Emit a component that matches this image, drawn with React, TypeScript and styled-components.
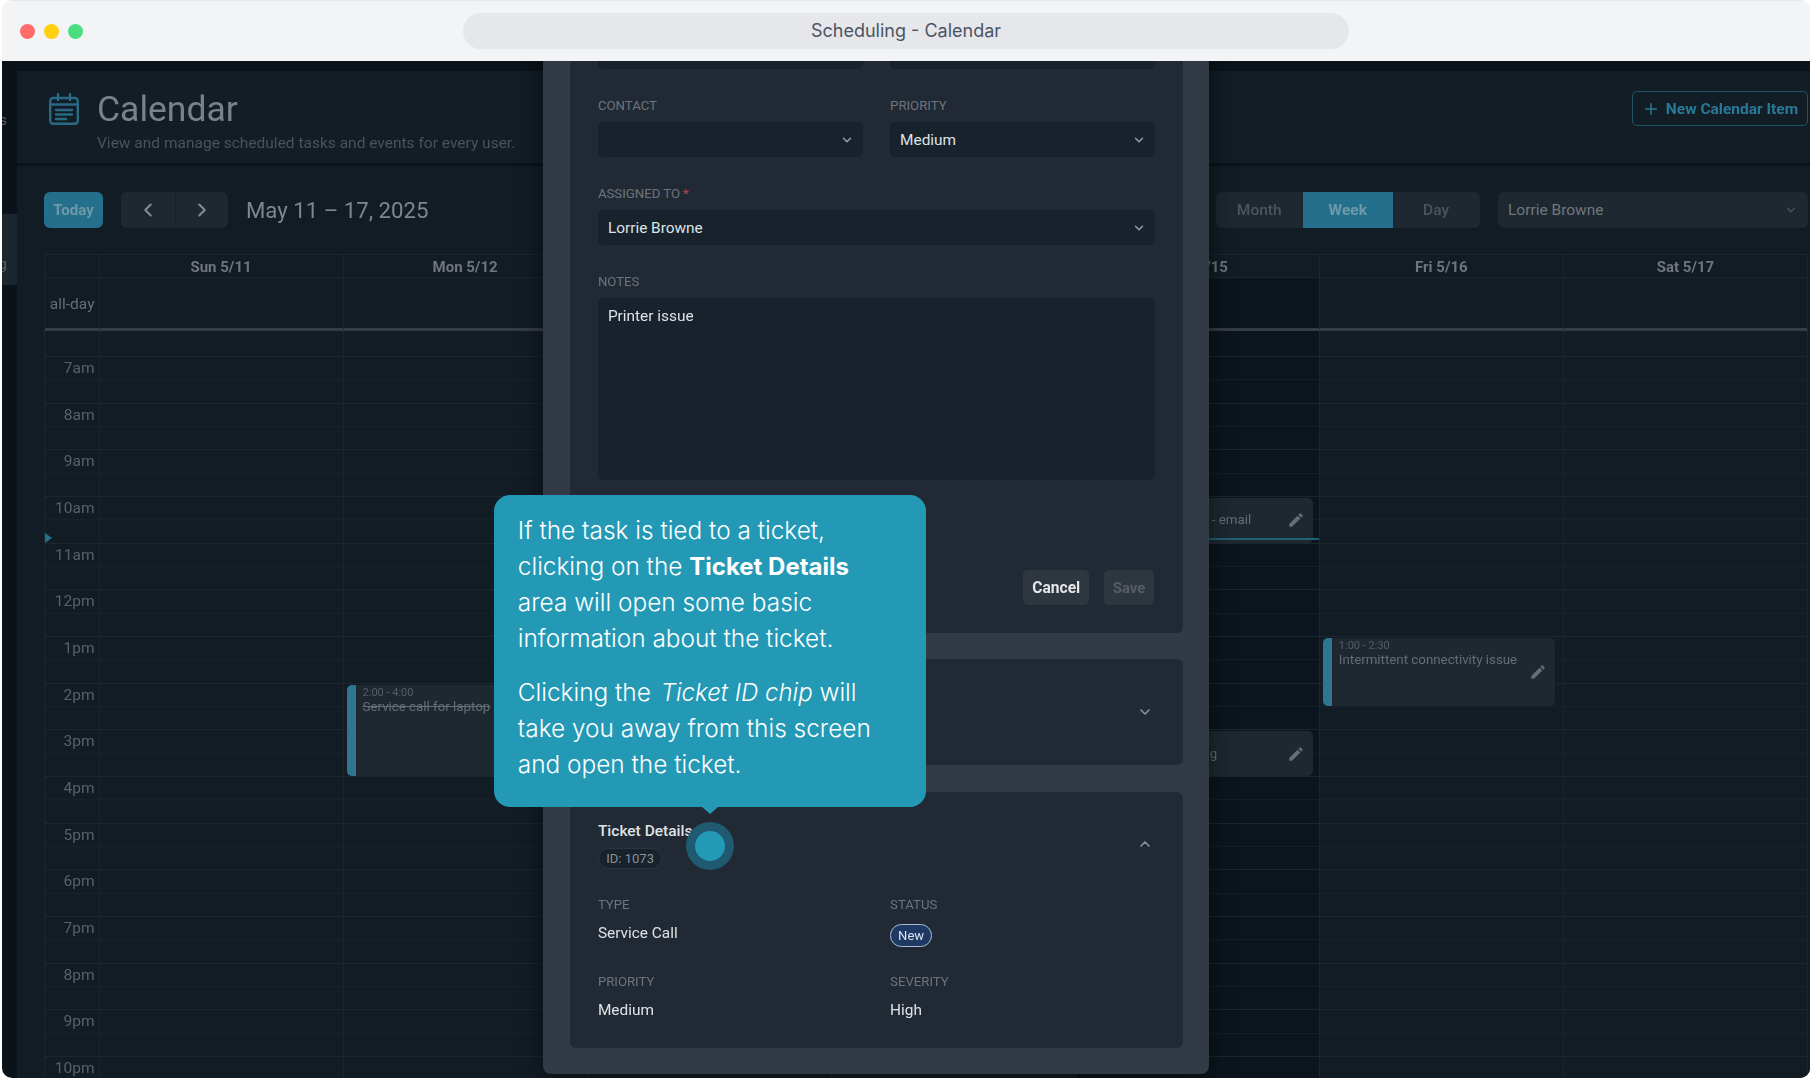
import React from 'react';
import styled, { createGlobalStyle } from 'styled-components';
import { ChevronDown, ChevronLeft, ChevronRight, ChevronUp, Plus } from 'lucide-react';
import { MdEdit } from 'react-icons/md';

const GlobalStyle = createGlobalStyle`
  html, body {
    margin: 0;
    width: 1812px;
    height: 1080px;
    overflow: hidden;
    background: #fff;
    font-family: 'Roboto', 'Liberation Sans', sans-serif;
  }
  * { box-sizing: border-box; }
`;

const Window = styled.div`
  margin-left: 2px;
  width: 1808px;
  height: 1078px;
  border-radius: 10px;
  overflow: hidden;
  display: flex;
  flex-direction: column;
`;

const TitleBar = styled.div`
  height: 61px;
  flex: none;
  display: flex;
  align-items: center;
  background: #f3f4f6;
  border-top: 1px solid #e5e7eb;
`;

const Dots = styled.div`
  width: 461px;
  padding-left: 18px;
  display: flex;
  gap: 9px;
`;

const Dot = styled.span<{ color: string }>`
  width: 15px;
  height: 15px;
  border-radius: 50%;
  background: ${props => props.color};
`;

const AddressBar = styled.div`
  width: 886px;
  height: 36px;
  border-radius: 18px;
  background: #e5e7eb;
  color: #4b5563;
  font-family: 'Inter', sans-serif;
  font-size: 18px;
  line-height: 36px;
  text-align: center;
`;

const Content = styled.div`
  flex: 1;
  position: relative;
  overflow: hidden;
  background: #0a131a;
`;

const Backdrop = styled.div`
  height: 100%;
  display: flex;
  filter: blur(0.5px);
`;

const Rail = styled.div`
  width: 15px;
  flex: none;
  padding-top: 9px;
  display: flex;
  flex-direction: column;
  gap: 73px;
`;

const NavItem = styled.div<{ active?: boolean }>`
  height: 71px;
  display: flex;
  justify-content: flex-end;
  align-items: flex-end;
  overflow: hidden;
  padding: 0 10px 12px 0;
  background: ${props => (props.active ? '#1c2630' : 'transparent')};
  color: #5a6167;
  font-size: 15px;
  line-height: 18px;
  white-space: nowrap;
`;

const Main = styled.div`
  flex: 1;
  min-width: 0;
  display: flex;
  flex-direction: column;
  padding-top: 10px;
`;

const Header = styled.div`
  height: 92px;
  flex: none;
  display: flex;
  background: #131d26;
  padding: 18px 2px 0 31.5px;
`;

const CalendarIcon = styled.svg`
  width: 30px;
  height: 32px;
  margin-top: 4px;
  margin-right: 18.5px;
  flex: none;
`;

const TitleBlock = styled.div`
  flex: 1;
`;

const Title = styled.div`
  font-size: 35.5px;
  line-height: 40px;
  color: #7a8188;
`;

const Subtitle = styled.div`
  margin-top: 4px;
  font-size: 15.5px;
  line-height: 20px;
  color: #4b535a;
`;

const NewButton = styled.div`
  width: 176px;
  height: 35px;
  margin-top: 2px;
  border: 1.5px solid #1f5468;
  border-radius: 5px;
  color: #277a97;
  font-size: 15.5px;
  font-weight: 700;
  display: flex;
  align-items: center;
  justify-content: center;
  gap: 6px;
  white-space: nowrap;
`;

const Panel = styled.div`
  flex: 1;
  min-height: 0;
  margin-top: 3px;
  background: #121c25;
  padding: 26px 2px 0 27px;
  overflow: hidden;
`;

const Toolbar = styled.div`
  height: 36px;
  display: flex;
  align-items: center;
`;

const TodayButton = styled.div`
  width: 59px;
  height: 36px;
  border-radius: 6px;
  background: #24708c;
  color: #6f98a8;
  font-size: 15px;
  font-weight: 700;
  display: flex;
  align-items: center;
  justify-content: center;
`;

const NavGroup = styled.div`
  margin-left: 18px;
  width: 107px;
  height: 36px;
  border-radius: 6px;
  overflow: hidden;
  background: #1e2831;
  display: grid;
  grid-template-columns: 1fr 1fr;
  color: #858b91;
`;

const NavCell = styled.div<{ divided?: boolean }>`
  display: flex;
  align-items: center;
  justify-content: center;
  border-left: ${props => (props.divided ? '1px solid #18222b' : 'none')};
`;

const DateRange = styled.div`
  margin-left: 18px;
  flex: 1;
  font-size: 22.2px;
  line-height: 38px;
  color: #80868c;
`;

const ViewGroup = styled.div`
  width: 264px;
  height: 36px;
  border-radius: 6px;
  overflow: hidden;
  background: #1e2831;
  display: grid;
  grid-template-columns: 87.5px 89.5px 87px;
`;

const ViewTab = styled.div<{ active?: boolean }>`
  background: ${props => (props.active ? '#24708c' : 'transparent')};
  color: ${props => (props.active ? '#6f98a8' : '#4d555c')};
  font-size: 15.5px;
  font-weight: ${props => (props.active ? 700 : 500)};
  display: flex;
  align-items: center;
  justify-content: center;
`;

const UserSelect = styled.div`
  margin-left: 18.5px;
  width: 310px;
  height: 36px;
  border-radius: 6px;
  background: #1e2831;
  color: #70777d;
  font-size: 15.5px;
  padding: 0 10px;
  display: flex;
  align-items: center;
  justify-content: space-between;
`;

const Grid = styled.div`
  margin-top: 26px;
  display: grid;
  grid-template-columns: 53.5px repeat(7, 1fr);
  border-top: 1px solid #1c262f;
  border-left: 1px solid #1c262f;
  border-right: 1px solid #1c262f;
`;

const DayHead = styled.div`
  height: 23px;
  border-left: 1px solid #1c262f;
  border-bottom: 1px solid #1c262f;
  color: #6f757b;
  font-size: 15px;
  font-weight: 700;
  line-height: 25px;
  text-align: center;
  white-space: nowrap;
  &:first-child { border-left: none; }
`;

const AllDayCell = styled.div<{ today?: boolean }>`
  height: 53px;
  border-left: 1px solid #1c262f;
  border-bottom: 3px solid #343c44;
  background: ${props => (props.today ? '#0c151d' : 'transparent')};
`;

const AllDayLabel = styled.div`
  height: 53px;
  border-bottom: 3px solid #343c44;
  padding: 17px 4px 0 0;
  color: #666d73;
  font-size: 15.5px;
  line-height: 18px;
  text-align: right;
`;

const Column = styled.div<{ today?: boolean }>`
  position: relative;
  border-left: 1px solid #1c262f;
  background: ${props => (props.today ? '#0c151d' : 'transparent')};
`;

const Gutter = styled.div`
  position: relative;
`;

const Slot = styled.div<{ hour?: boolean; first?: boolean }>`
  height: ${props => (props.first ? '25px' : '23.333px')};
  border-top: ${props => (props.first ? 'none' : props.hour ? '1px solid #1c262f' : '1px dotted #1c262f')};
`;

const TimeSlot = styled(Slot)`
  border-top-color: #1c262f;
  padding-right: 4px;
  color: #596067;
  font-size: 15.5px;
  line-height: 22px;
  text-align: right;
  white-space: nowrap;
`;

const NowMarker = styled.div`
  position: absolute;
  top: 202px;
  left: 0;
  width: 0;
  height: 0;
  border-top: 5px solid transparent;
  border-bottom: 5px solid transparent;
  border-left: 7px solid #24708c;
`;

const NowLine = styled.div`
  position: absolute;
  top: 207px;
  left: 0;
  right: 0;
  height: 2px;
  background: #1f5f78;
  z-index: 2;
`;

const Event = styled.div<{ tail: number }>`
  position: absolute;
  left: 3px;
  right: ${props => props.tail}px;
  display: flex;
  border-radius: 5px;
  overflow: hidden;
  background: #1e2831;
  color: #5e656b;
`;

const EventBar = styled.div`
  width: 9px;
  flex: none;
  background: #2e7590;
`;

const EventBody = styled.div<{ centered?: boolean }>`
  flex: 1;
  min-width: 0;
  padding: ${props => (props.centered ? '0 0 0 8px' : '1px 0 0 7px')};
  display: flex;
  flex-direction: column;
  justify-content: ${props => (props.centered ? 'center' : 'flex-start')};
`;

const EventTime = styled.div`
  font-size: 11px;
  line-height: 13px;
  color: #565d63;
`;

const EventTitle = styled.div<{ done?: boolean; indent?: number }>`
  font-size: 13.3px;
  line-height: 16px;
  color: #666d73;
  white-space: nowrap;
  padding-left: ${props => props.indent || 0}px;
  text-decoration: ${props => (props.done ? 'line-through' : 'none')};
`;

const EventEdit = styled.div`
  position: absolute;
  right: 8px;
  top: 50%;
  transform: translateY(-50%);
  display: flex;
  color: #666d73;
`;

const Overlay = styled.div`
  position: absolute;
  inset: 0;
  display: flex;
  align-items: flex-end;
  padding: 0 0 4px 541.4px;
`;

const Modal = styled.div`
  flex: none;
  width: 665.6px;
  padding: 0 26px 26.3px 27px;
  border-radius: 0 0 8px 8px;
  background: #323a45;
  box-shadow: 0 0 24px rgba(0, 0, 0, 0.55);
  display: flex;
  flex-direction: column;
  gap: 26.7px;
`;

const Card = styled.div`
  border-radius: 6px;
  background: #212934;
  padding: 0 27.5px;
`;

const FormCard = styled(Card)`
  padding-bottom: 27.4px;
`;

const CollapsedCard = styled(Card)`
  height: 105.7px;
  padding-right: 30px;
  display: flex;
  align-items: center;
  justify-content: flex-end;
  color: #8a9097;
`;

const TicketCard = styled(Card)`
  padding-top: 31px;
  padding-bottom: 28.7px;
  height: 256px;
`;

const FieldRow = styled.div`
  display: grid;
  grid-template-columns: 265px 265px;
  column-gap: 27.2px;
  margin-bottom: 28px;
`;

const Label = styled.div`
  height: 16px;
  font-size: 13.2px;
  line-height: 18px;
  color: #6e747b;
  text-transform: uppercase;
`;

const Required = styled.span`
  color: #b4474f;
  margin-left: 3px;
`;

const SelectBox = styled.div`
  margin-top: 9px;
  height: 35px;
  padding: 0 9px 0 10px;
  border-radius: 5px;
  background: #18222c;
  color: #dfe2e5;
  font-size: 15.4px;
  display: flex;
  align-items: center;
  justify-content: space-between;
  & svg { margin-left: auto; color: #9aa0a6; }
`;

const NotesBox = styled.div`
  margin-top: 9px;
  height: 182px;
  padding: 9px 10px;
  border-radius: 5px;
  background: #18222c;
  color: #dfe2e5;
  font-size: 15.4px;
  line-height: 18px;
`;

const WideField = styled.div`
  margin-bottom: 28px;
  &:last-of-type { margin-bottom: 0; }
`;

const Actions = styled.div`
  margin-top: 90px;
  padding-right: 1px;
  display: flex;
  justify-content: flex-end;
  gap: 14.5px;
`;

const ActionButton = styled.div<{ disabled?: boolean }>`
  height: 35px;
  padding: 0 9px;
  border-radius: 5px;
  background: #2e3640;
  color: ${props => (props.disabled ? '#565d65' : '#e4e6e8')};
  font-size: ${props => (props.disabled ? 15 : 15.6)}px;
  font-weight: 700;
  display: flex;
  align-items: center;
`;

const TicketHead = styled.div`
  display: flex;
  justify-content: space-between;
  align-items: flex-start;
  padding-right: 2.5px;
  color: #8a9097;
  & > svg { margin-top: 13px; }
`;

const TicketName = styled.div`
  font-size: 15.5px;
  font-weight: 500;
  line-height: 16px;
  color: #dfe2e5;
`;

const IdChip = styled.div`
  margin-top: 9px;
  width: 64.5px;
  height: 21.3px;
  border-radius: 11px;
  border: 1px solid #2c3540;
  background: #18222c;
  color: #8a9197;
  font-size: 13px;
  display: flex;
  align-items: center;
  justify-content: center;
`;

const DetailRow = styled.div<{ top: number }>`
  display: grid;
  grid-template-columns: 265px 265px;
  column-gap: 27.2px;
  margin-top: ${props => props.top}px;
`;

const Value = styled.div`
  margin-top: 12px;
  font-size: 15.4px;
  line-height: 18px;
  color: #dfe2e5;
`;

const StatusChip = styled.div`
  margin-top: 12px;
  width: 42px;
  height: 22.6px;
  border-radius: 11.3px;
  border: 1.5px solid #a9bcd3;
  background: #1e3a64;
  color: #d8e3ef;
  font-size: 13px;
  display: flex;
  align-items: center;
  justify-content: center;
`;

const Tooltip = styled.div`
  position: absolute;
  left: 491.8px;
  top: 434px;
  width: 432px;
  height: 311.7px;
  padding: 17px 24px 0;
  border-radius: 16px;
  background: #2399b6;
  color: #fff;
  font-family: 'Inter', sans-serif;
  font-size: 24.4px;
  font-weight: 300;
  line-height: 36px;
  &::after {
    content: '';
    position: absolute;
    left: 208px;
    bottom: -7px;
    border-left: 8px solid transparent;
    border-right: 8px solid transparent;
    border-top: 7px solid #2399b6;
  }
`;

const TipText = styled.p<{ spaced?: boolean }>`
  margin: ${props => (props.spaced ? '18px 0 0' : '0')};
  white-space: nowrap;
  & b { font-weight: 700; font-size: 24px; line-height: 0; }
  & i { margin-left: 3px; font-size: 24px; line-height: 0; }
`;

const Beacon = styled.div`
  position: absolute;
  left: 684px;
  top: 761px;
  width: 48px;
  height: 48px;
  border-radius: 50%;
  background: #1f5a70;
  display: flex;
  align-items: center;
  justify-content: center;
  &::after {
    content: '';
    width: 30px;
    height: 30px;
    border-radius: 50%;
    background: #2399b6;
  }
`;

const days = ['Sun 5/11', 'Mon 5/12', 'Tue 5/13', 'Wed 5/14', 'Thu 5/15', 'Fri 5/16', 'Sat 5/17'];
const hours = ['7am', '8am', '9am', '10am', '11am', '12pm', '1pm', '2pm', '3pm', '4pm', '5pm', '6pm', '7pm', '8pm', '9pm', '10pm'];

const HOUR = 46.667;

interface CalEvent {
  start: number;
  end: number;
  time?: string;
  title: string;
  done?: boolean;
  edit?: boolean;
  indent?: number;
  tail: number;
}

const events: Record<number, CalEvent[]> = {
  1: [{ start: 14, end: 16, time: '2:00 - 4:00', title: 'Service call for laptop', done: true, tail: 8 }],
  4: [
    { start: 10, end: 11, title: '- email', edit: true, indent: 116, tail: 6 },
    { start: 15, end: 16, title: 'g', edit: true, indent: 114, tail: 6 },
  ],
  5: [{ start: 13, end: 14.5, time: '1:00 - 2:30', title: 'Intermittent connectivity issue', edit: true, tail: 8 }],
};

const Slots = () => (
  <>
    <Slot first />
    {hours.map(h => (
      <React.Fragment key={h}>
        <Slot hour />
        <Slot />
      </React.Fragment>
    ))}
  </>
);

const App: React.FC = () => {
  return (
    <>
      <GlobalStyle />
      <Window>
        <TitleBar>
          <Dots>
            <Dot color="#ff6b6b" />
            <Dot color="#ffcf10" />
            <Dot color="#4ade80" />
          </Dots>
          <AddressBar>Scheduling - Calendar</AddressBar>
        </TitleBar>
        <Content>
          <Backdrop>
            <Rail>
              <NavItem>Tickets</NavItem>
              <NavItem active>Scheduling</NavItem>
            </Rail>
            <Main>
              <Header>
                <CalendarIcon viewBox="0 0 30 32" fill="none" stroke="#2a6a85" strokeWidth="2.4" strokeLinecap="round">
                  <rect x="1.2" y="5" width="27.6" height="25.8" rx="3" />
                  <path d="M9 1.2V7M21 1.2V7M1.5 11.5H28.5M7 17H23M7 21.5H23M7 26H17" />
                </CalendarIcon>
                <TitleBlock>
                  <Title>Calendar</Title>
                  <Subtitle>View and manage scheduled tasks and events for every user.</Subtitle>
                </TitleBlock>
                <NewButton>
                  <Plus size={18} strokeWidth={2} />
                  New Calendar Item
                </NewButton>
              </Header>
              <Panel>
                <Toolbar>
                  <TodayButton>Today</TodayButton>
                  <NavGroup>
                    <NavCell><ChevronLeft size={22} strokeWidth={2.2} /></NavCell>
                    <NavCell divided><ChevronRight size={22} strokeWidth={2.2} /></NavCell>
                  </NavGroup>
                  <DateRange>May 11 – 17, 2025</DateRange>
                  <ViewGroup>
                    <ViewTab>Month</ViewTab>
                    <ViewTab active>Week</ViewTab>
                    <ViewTab>Day</ViewTab>
                  </ViewGroup>
                  <UserSelect>
                    Lorrie Browne
                    <ChevronDown size={14} color="#4d555c" />
                  </UserSelect>
                </Toolbar>
                <Grid>
                  <DayHead />
                  {days.map(d => <DayHead key={d}>{d}</DayHead>)}
                  <AllDayLabel>all-day</AllDayLabel>
                  {days.map((d, i) => <AllDayCell key={d} today={i === 4} />)}
                  <Gutter>
                    <Slot first />
                    {hours.map(h => (
                      <React.Fragment key={h}>
                        <TimeSlot hour>{h}</TimeSlot>
                        <Slot />
                      </React.Fragment>
                    ))}
                    <NowMarker />
                  </Gutter>
                  {days.map((d, i) => (
                    <Column key={d} today={i === 4}>
                      <Slots />
                      {i === 4 && <NowLine />}
                      {(events[i] || []).map(ev => (
                        <Event
                          key={ev.title}
                          tail={ev.tail}
                          style={{
                            top: 25 + (ev.start - 7) * HOUR + 2,
                            height: (ev.end - ev.start) * HOUR - 2,
                          }}
                        >
                          <EventBar />
                          <EventBody centered={!ev.time}>
                            {ev.time && <EventTime>{ev.time}</EventTime>}
                            <EventTitle done={ev.done} indent={ev.indent}>{ev.title}</EventTitle>
                          </EventBody>
                          {ev.edit && <EventEdit><MdEdit size={18} /></EventEdit>}
                        </Event>
                      ))}
                    </Column>
                  ))}
                </Grid>
              </Panel>
            </Main>
          </Backdrop>
          <Overlay>
            <Modal>
              <FormCard>
                <FieldRow>
                  <div><Label /><SelectBox /></div>
                  <div><Label /><SelectBox /></div>
                </FieldRow>
                <FieldRow>
                  <div>
                    <Label>Contact</Label>
                    <SelectBox><ChevronDown size={14} strokeWidth={2.5} /></SelectBox>
                  </div>
                  <div>
                    <Label>Priority</Label>
                    <SelectBox>Medium<ChevronDown size={14} strokeWidth={2.5} /></SelectBox>
                  </div>
                </FieldRow>
                <WideField>
                  <Label>Assigned To<Required>*</Required></Label>
                  <SelectBox>Lorrie Browne<ChevronDown size={14} strokeWidth={2.5} /></SelectBox>
                </WideField>
                <WideField>
                  <Label>Notes</Label>
                  <NotesBox>Printer issue</NotesBox>
                </WideField>
                <Actions>
                  <ActionButton>Cancel</ActionButton>
                  <ActionButton disabled>Save</ActionButton>
                </Actions>
              </FormCard>
              <CollapsedCard>
                <ChevronDown size={16} strokeWidth={2.5} />
              </CollapsedCard>
              <TicketCard>
                <TicketHead>
                  <div>
                    <TicketName>Ticket Details</TicketName>
                    <IdChip>ID: 1073</IdChip>
                  </div>
                  <ChevronUp size={16} strokeWidth={2.5} />
                </TicketHead>
                <DetailRow top={27}>
                  <div><Label>Type</Label><Value>Service Call</Value></div>
                  <div><Label>Status</Label><StatusChip>New</StatusChip></div>
                </DetailRow>
                <DetailRow top={26.4}>
                  <div><Label>Priority</Label><Value>Medium</Value></div>
                  <div><Label>Severity</Label><Value>High</Value></div>
                </DetailRow>
              </TicketCard>
            </Modal>
          </Overlay>
          <Tooltip>
            <TipText>
              If the task is tied to a ticket,<br />
              clicking on the <b>Ticket Details</b><br />
              area will open some basic<br />
              information about the ticket.
            </TipText>
            <TipText spaced>
              Clicking the <i>Ticket ID chip</i> will<br />
              take you away from this screen<br />
              and open the ticket.
            </TipText>
          </Tooltip>
          <Beacon />
        </Content>
      </Window>
    </>
  );
};

export default App;
